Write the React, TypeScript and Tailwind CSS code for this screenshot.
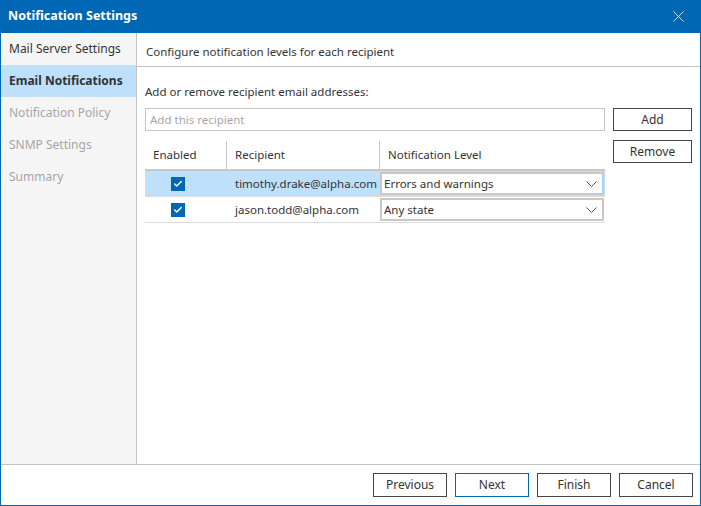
import { Check, X } from 'lucide-react'

const FONT = "font-['Noto_Sans',_'Open_Sans',_sans-serif]"

const STEPS = [
  { label: 'Mail Server Settings', state: 'done' },
  { label: 'Email Notifications', state: 'active' },
  { label: 'Notification Policy', state: 'todo' },
  { label: 'SNMP Settings', state: 'todo' },
  { label: 'Summary', state: 'todo' },
]

const ROWS = [
  { email: 'timothy.drake@alpha.com', level: 'Errors and warnings', selected: true },
  { email: 'jason.todd@alpha.com', level: 'Any state', selected: false },
]

function Btn({ label, primary }: { label: string; primary?: boolean }) {
  return (
    <button
      className={`w-[74px] h-[24px] text-[12px] text-[#333] bg-white border ${
        primary ? 'border-[#0067b4]' : 'border-[#444]'
      }`}
    >
      {label}
    </button>
  )
}

export default function App() {
  return (
    <div className={`${FONT} w-[701px] h-[506px] flex flex-col bg-white border-x border-b border-[#0067b4] text-[11.5px] text-[#333]`}>
      {/* title bar */}
      <div className="h-[33px] shrink-0 bg-[#0067b4] -mx-px flex items-center justify-between pl-[8px] pr-[13px]">
        <span className="text-white font-bold text-[12.5px]">Notification Settings</span>
        <X className="w-[19px] h-[19px] text-white" strokeWidth={1} />
      </div>

      <div className="flex-1 flex min-h-0">
        {/* sidebar */}
        <div className="w-[136px] shrink-0 bg-[#f5f5f5] border-r border-[#c3c3c3] flex flex-col text-[12px]">
          {STEPS.map(s => (
            <div
              key={s.label}
              className={`h-[32px] flex items-center pl-[8px] ${
                s.state === 'active'
                  ? 'bg-[#bee0fb] font-bold text-[#333]'
                  : s.state === 'done'
                  ? 'text-[#333]'
                  : 'text-[#a6a6a6]'
              }`}
            >
              {s.label}
            </div>
          ))}
        </div>

        {/* main */}
        <div className="flex-1 flex flex-col min-w-0">
          <div className="h-[34px] shrink-0 border-b border-[#c3c3c3] flex items-center pl-[9px] pt-[5px]">
            Configure notification levels for each recipient
          </div>

          <div className="pl-[8px] pr-[8px] pt-[16px]">
            <div className="h-[18px] flex items-center">Add or remove recipient email addresses:</div>

            <div className="flex gap-[8px] mt-[7px]">
              <div className="flex-1 flex flex-col">
                <div className="h-[23px] border border-[#c6c6c0] flex items-center pl-[4px] text-[#a6a6a6]">
                  Add this recipient
                </div>

                {/* table */}
                <div className="mt-[10px]">
                  <div className="h-[30px] flex border-b-2 border-[#c8c8c8]">
                    <div className="w-[82px] flex items-center pl-[8px] border-r border-[#c8c8c8]">Enabled</div>
                    <div className="w-[153px] flex items-center pl-[8px] border-r border-[#c8c8c8]">Recipient</div>
                    <div className="flex-1 flex items-center pl-[8px]">Notification Level</div>
                  </div>
                  {ROWS.map(r => (
                    <div
                      key={r.email}
                      className={`h-[26px] flex border-b border-[#dcdcdc] ${r.selected ? 'bg-[#bee0fb]' : 'bg-white'}`}
                    >
                      <div className="w-[82px] flex items-center pl-[26px]">
                        <span className="w-[14px] h-[14px] bg-[#0067b4] flex items-center justify-center">
                          <Check className="w-[10px] h-[10px] text-white" strokeWidth={3.5} />
                        </span>
                      </div>
                      <div className="w-[153px] flex items-center pl-[8px] whitespace-nowrap overflow-hidden">{r.email}</div>
                      <div className="flex-1 flex items-center py-[1px] pr-[1px]">
                        <div
                          className={`w-full h-full bg-white border-2 flex items-center justify-between pl-[2px] pr-[5px] ${
                            r.selected ? 'border-[#c8c8c8] border-r-[#a9d3f5]' : 'border-[#c8c8c8]'
                          }`}
                        >
                          <span>{r.level}</span>
                          <svg width="11" height="6" viewBox="0 0 11 6" fill="none">
                            <path d="M0.5 0.5L5.5 5.5L10.5 0.5" stroke="#555" strokeWidth="1" />
                          </svg>
                        </div>
                      </div>
                    </div>
                  ))}
                </div>
              </div>

              <div className="w-[79px] flex flex-col gap-[9px]">
                <button className="h-[23px] border border-[#444] bg-white text-[12px] text-[#333]">Add</button>
                <button className="h-[23px] border border-[#444] bg-white text-[12px] text-[#333]">Remove</button>
              </div>
            </div>
          </div>
        </div>
      </div>

      {/* footer */}
      <div className="h-[41px] shrink-0 border-t border-[#c3c3c3] flex items-center justify-end gap-[8px] pr-[7px]">
        <Btn label="Previous" />
        <Btn label="Next" primary />
        <Btn label="Finish" />
        <Btn label="Cancel" />
      </div>
    </div>
  )
}
